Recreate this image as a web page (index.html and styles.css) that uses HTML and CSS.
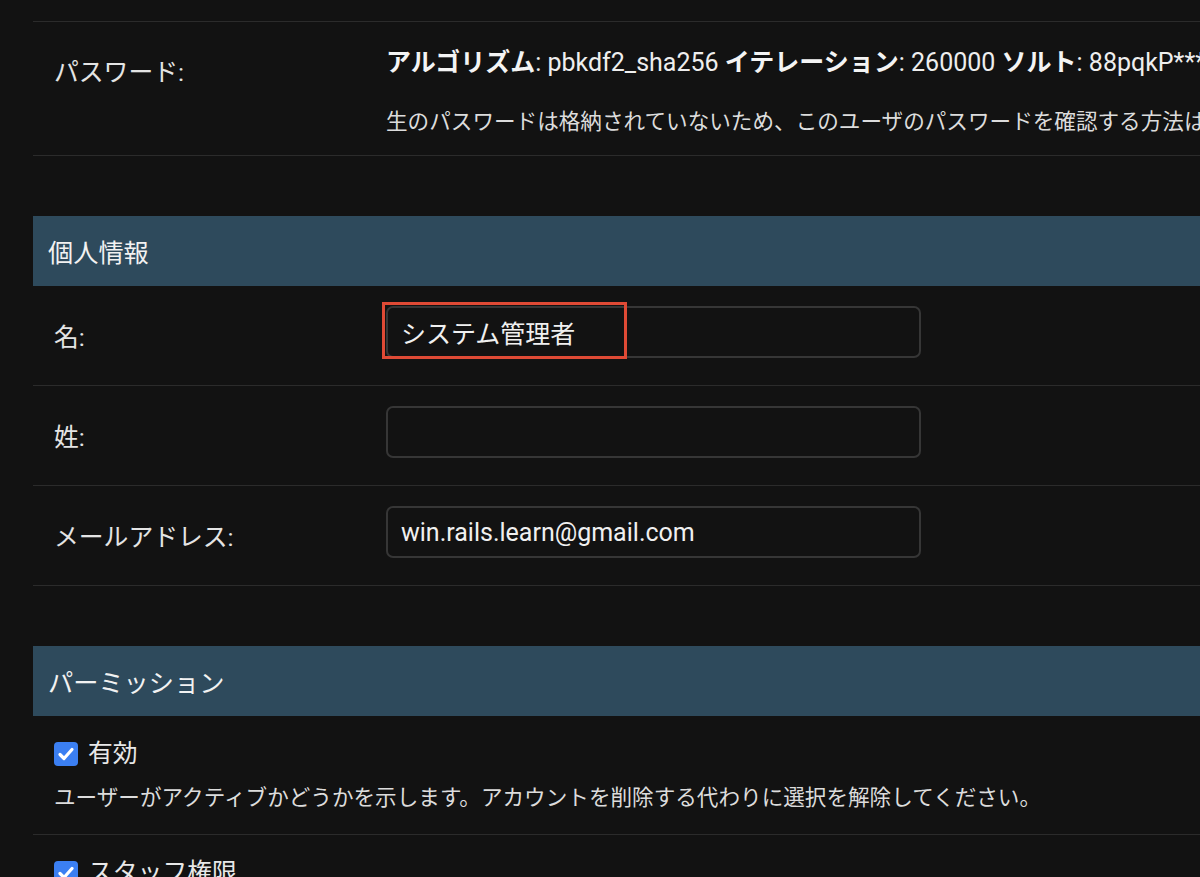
FILE: index.html
```html
<!DOCTYPE html>
<html lang="ja">
<head>
    <meta charset="UTF-8">
    <meta name="viewport" content="width=device-width, initial-scale=1.0">
    <title>ユーザを変更</title>
    <link rel="stylesheet" href="styles.css">
</head>
<body>
    <div class="content">
        <!-- tail of the previous (username) row -->
        <div class="form-row clipped"></div>

        <div class="form-row pw-row">
            <label class="field-label">パスワード:</label>
            <div class="readonly">
                <p class="hash"><strong>アルゴリズム</strong>: pbkdf2_sha256 <strong>イテレーション</strong>: 260000 <strong>ソルト</strong>: 88pqkP******</p>
                <div class="help">生のパスワードは格納されていないため、このユーザのパスワードを確認する方法はありません。</div>
            </div>
        </div>

        <!-- 個人情報 -->
        <fieldset class="module">
            <h2>個人情報</h2>
            <div class="form-row">
                <label class="field-label" for="id_first_name">名:</label>
                <div class="input-wrap">
                    <input class="text-input" id="id_first_name" type="text" value="システム管理者">
                    <div class="highlight"></div>
                </div>
            </div>
            <div class="form-row">
                <label class="field-label" for="id_last_name">姓:</label>
                <div class="input-wrap">
                    <input class="text-input" id="id_last_name" type="text" value="">
                </div>
            </div>
            <div class="form-row">
                <label class="field-label" for="id_email">メールアドレス:</label>
                <div class="input-wrap">
                    <input class="text-input" id="id_email" type="email" value="win.rails.learn@gmail.com">
                </div>
            </div>
        </fieldset>

        <!-- パーミッション -->
        <fieldset class="module">
            <h2>パーミッション</h2>
            <div class="form-row check-row">
                <div class="check-line">
                    <span class="checkbox">
                        <svg viewBox="0 0 24 24" width="24" height="24"><path d="M6 12.5l4 4 8-9" fill="none" stroke="#fff" stroke-width="3.2" stroke-linecap="round" stroke-linejoin="round"/></svg>
                    </span>
                    <label class="check-label">有効</label>
                </div>
                <div class="help">ユーザーがアクティブかどうかを示します。アカウントを削除する代わりに選択を解除してください。</div>
            </div>
            <div class="form-row check-row">
                <div class="check-line">
                    <span class="checkbox">
                        <svg viewBox="0 0 24 24" width="24" height="24"><path d="M6 12.5l4 4 8-9" fill="none" stroke="#fff" stroke-width="3.2" stroke-linecap="round" stroke-linejoin="round"/></svg>
                    </span>
                    <label class="check-label">スタッフ権限</label>
                </div>
                <div class="help">ユーザーが管理サイトにログイン可能かどうかを示します。</div>
            </div>
        </fieldset>
    </div>
</body>
</html>
```

FILE: styles.css
```css
/* dark admin change form, zoomed */
body {
    margin: 0;
    background-color: #121212;
    color: #e6e6e6;
    font-family: Roboto, "Noto Sans CJK JP", sans-serif;
    height: 877px;
    overflow: hidden;
}

.content {
    margin-left: 33px;
    width: 1300px;
}

.form-row {
    display: flex;
    align-items: center;
    padding: 20px 0 27px 21px;
    border-bottom: 1px solid #2b2b2b;
}

.form-row.clipped {
    height: 21px;
    padding: 0;
}

.field-label {
    width: 332px;
    flex-shrink: 0;
    font-size: 24.8px;
    line-height: 30px;
    padding-top: 12px;
    color: #e4e4e4;
}

/* password row */
.pw-row {
    align-items: flex-start;
    padding: 26px 0 18px 21px;
}

.pw-row .field-label {
    padding-top: 10px;
}

.hash {
    margin: 0;
    font-size: 25px;
    line-height: 30px;
    white-space: nowrap;
    color: #eeeeee;
}

.hash strong {
    font-weight: 700;
    color: #f4f4f4;
}

.help {
    font-size: 21.6px;
    line-height: 30px;
    white-space: nowrap;
    color: #dcdcdc;
}

.pw-row .help {
    margin-top: 29px;
}

/* fieldsets */
.module {
    margin: 60px 0 0;
    padding: 0;
    border: none;
    min-width: 0;
}

.module h2 {
    margin: 0;
    height: 70px;
    padding-left: 15px;
    display: flex;
    align-items: center;
    background-color: #2e4a5c;
    color: #f2f2f2;
    font-size: 25.2px;
    font-weight: 400;
}

.input-wrap {
    position: relative;
}

.text-input {
    box-sizing: border-box;
    width: 535px;
    height: 52px;
    padding: 0 13px;
    background-color: #121212;
    border: 2px solid #363636;
    border-radius: 7px;
    color: #f0f0f0;
    font-family: Roboto, "Noto Sans CJK JP", sans-serif;
    font-size: 25px;
    outline: none;
}

/* annotation box around the first name */
.highlight {
    position: absolute;
    left: -4px;
    top: -4px;
    width: 245px;
    height: 57px;
    box-sizing: border-box;
    border: 3px solid #df4a35;
}

/* checkbox rows */
.check-row {
    flex-direction: column;
    align-items: flex-start;
    padding: 26px 0 21px 21px;
}

.check-line {
    display: flex;
    align-items: center;
    gap: 10px;
    height: 24px;
}

.checkbox {
    width: 24px;
    height: 24px;
    border-radius: 4px;
    background-color: #3b7ff2;
    display: flex;
}

.check-label {
    font-size: 24.8px;
    line-height: 30px;
    color: #e8e8e8;
}

.check-row .help {
    margin-top: 17px;
}
```
